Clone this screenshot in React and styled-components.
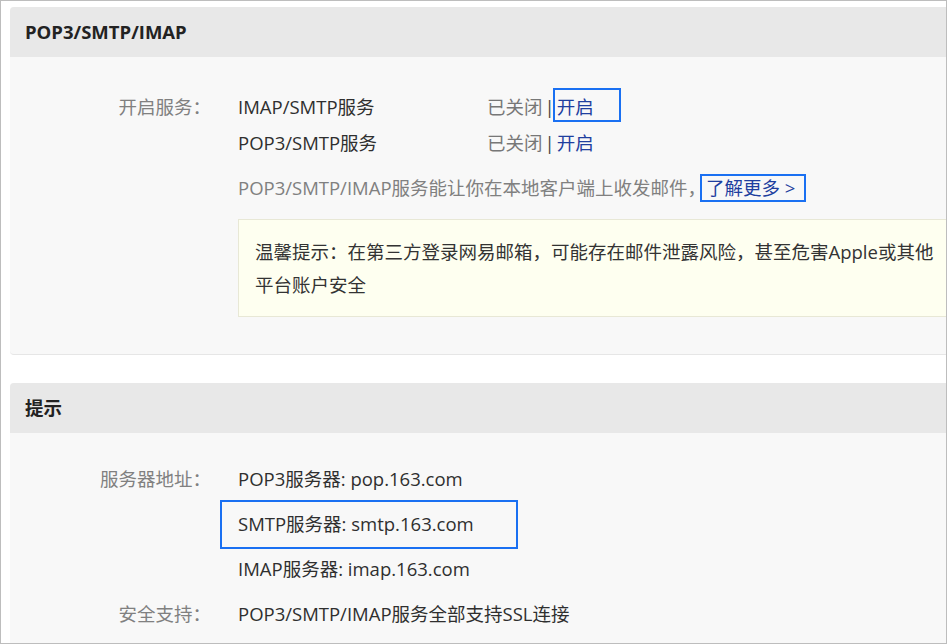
import React from "react";
import styled, { createGlobalStyle } from "styled-components";

const GlobalStyle = createGlobalStyle`
  html, body {
    margin: 0;
    padding: 0;
    background: #ffffff;
  }
  body {
    font-family: "Open Sans", "Noto Sans CJK SC", sans-serif;
    font-size: 18.5px;
    color: #2f2f2f;
  }
`;

const Frame = styled.div`
  box-sizing: border-box;
  width: 947px;
  height: 644px;
  border: 1px solid #bdbdbd;
  padding: 6px 0 0 9px;
  overflow: hidden;
  background: #fff;
`;

const Panel = styled.section`
  width: 960px;
  margin-bottom: 28px;
  background: #f8f8f8;
  border-radius: 4px;
  border-bottom: 1px solid #e6e6e6;
  overflow: hidden;
`;

const PanelHeader = styled.h2`
  margin: 0;
  height: 50px;
  line-height: 50px;
  padding: 0 15px;
  background: #e8e8e8;
  font-size: 18.5px;
  font-weight: 700;
  color: #222;
`;

const PanelBody = styled.div`
  padding: ${(p) => p.$top}px 0 ${(p) => p.$bottom}px;
`;

const Field = styled.div`
  display: grid;
  grid-template-columns: 201px 1fr;
  column-gap: 27px;
  line-height: ${(p) => p.$row}px;
`;

const Label = styled.div`
  text-align: right;
  color: #808080;
`;

const Values = styled.div`
  display: flex;
  flex-direction: column;
`;

const ServiceRow = styled.div`
  display: grid;
  grid-template-columns: 249px auto;
`;

const Status = styled.span`
  color: #777;
`;

const Sep = styled.span`
  color: #444;
  margin: 0 2px;
`;

const Action = styled.span`
  color: #1f3f9f;
  cursor: pointer;
`;

const Annotated = styled.span`
  position: relative;
  display: inline-block;

  &::after {
    content: "";
    position: absolute;
    box-sizing: border-box;
    left: ${(p) => p.$left}px;
    top: ${(p) => p.$top}px;
    width: ${(p) => p.$w}px;
    height: ${(p) => p.$h}px;
    border: 2px solid #1a70f2;
    pointer-events: none;
  }
`;

const Desc = styled.div`
  margin-top: 9px;
  color: #808080;
`;

const Tip = styled.div`
  margin-top: 13px;
  margin-right: -40px;
  padding: 15px 16px;
  background: #fefff0;
  border: 1px solid #e8e8d6;
  line-height: 33px;
  color: #333;
`;

const TipText = styled.p`
  margin: 0;
  white-space: nowrap;
`;

function ServiceLine({ name, annotated }) {
  const action = <Action>开启</Action>;
  return (
    <ServiceRow>
      <span>{name}</span>
      <span>
        <Status>已关闭</Status>
        <Sep>|</Sep>
        {annotated ? (
          <Annotated $left={-4} $top={-1} $w={68} $h={34}>
            {action}
          </Annotated>
        ) : (
          action
        )}
      </span>
    </ServiceRow>
  );
}

export default function App() {
  return (
    <>
      <GlobalStyle />
      <Frame>
        <Panel>
          <PanelHeader>POP3/SMTP/IMAP</PanelHeader>
          <PanelBody $top={32} $bottom={37}>
            <Field $row={36}>
              <Label>开启服务：</Label>
              <Values>
                <ServiceLine name="IMAP/SMTP服务" annotated />
                <ServiceLine name="POP3/SMTP服务" />
                <Desc>
                  POP3/SMTP/IMAP服务能让你在本地客户端上收发邮件，
                  <Annotated $left={-6} $top={4} $w={106} $h={28}>
                    <Action>了解更多 &gt;</Action>
                  </Annotated>
                </Desc>
                <Tip>
                  <TipText>
                    温馨提示：在第三方登录网易邮箱，可能存在邮件泄露风险，甚至危害Apple或其他
                    <br />
                    平台账户安全
                  </TipText>
                </Tip>
              </Values>
            </Field>
          </PanelBody>
        </Panel>

        <Panel>
          <PanelHeader>提示</PanelHeader>
          <PanelBody $top={23} $bottom={30}>
            <Field $row={45}>
              <Label>服务器地址：</Label>
              <Values>
                <span>POP3服务器: pop.163.com</span>
                <span>
                  <Annotated $left={-18} $top={-1} $w={298} $h={49}>
                    SMTP服务器: smtp.163.com
                  </Annotated>
                </span>
                <span>IMAP服务器: imap.163.com</span>
              </Values>
            </Field>
            <Field $row={45}>
              <Label>安全支持：</Label>
              <Values>
                <span>POP3/SMTP/IMAP服务全部支持SSL连接</span>
              </Values>
            </Field>
          </PanelBody>
        </Panel>
      </Frame>
    </>
  );
}
